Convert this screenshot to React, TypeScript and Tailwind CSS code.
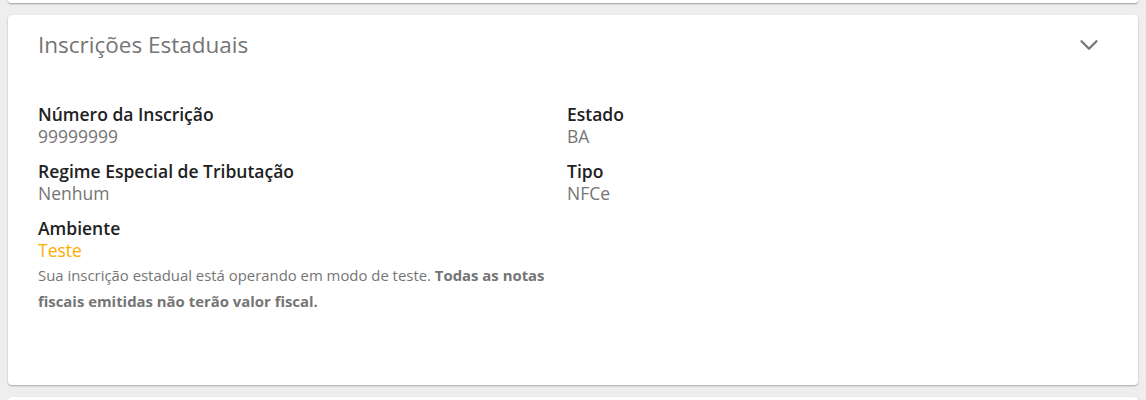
import { ChevronDown } from 'lucide-react'

const font = { fontFamily: '"Open Sans", "Liberation Sans", sans-serif' }

function Field({ label, value }: { label: string; value: string }) {
  return (
    <div className="mb-[13px]">
      <div className="text-[17.5px] leading-[22px] font-semibold text-[#212121]">{label}</div>
      <div className="text-[17.5px] leading-[22px] text-[#757575]">{value}</div>
    </div>
  )
}

export default function App() {
  return (
    <div className="min-h-[400px] bg-[#eeeeee]" style={font}>
      <div className="mx-2 h-[3px] rounded-b-sm bg-white shadow-[0_1px_2px_rgba(0,0,0,0.35)]" />
      <section className="mx-2 mt-3 h-[370px] rounded-sm bg-white shadow-[0_1px_2px_rgba(0,0,0,0.3)] px-[30px] pt-[15px]">
        <div className="flex items-center justify-between">
          <h2 className="text-[22.5px] leading-[30px] font-normal text-[#757575]">Inscrições Estaduais</h2>
          <ChevronDown className="mr-[4px] h-[30px] w-[30px] text-[#757575]" strokeWidth={1.8} />
        </div>
        <div className="mt-[43px] grid grid-cols-[529px_1fr]">
          <div className="pr-[10px]">
            <Field label="Número da Inscrição" value="99999999" />
            <Field label="Regime Especial de Tributação" value="Nenhum" />
            <div className="text-[17.5px] leading-[22px] font-semibold text-[#212121]">Ambiente</div>
            <div className="text-[17.5px] leading-[22px] text-[#ffab00]">Teste</div>
            <p className="mt-[1px] text-[14.9px] leading-[26px] text-[#757575]">
              Sua inscrição estadual está operando em modo de teste.{' '}
              <strong className="font-bold">Todas as notas fiscais emitidas não terão valor fiscal.</strong>
            </p>
          </div>
          <div>
            <Field label="Estado" value="BA" />
            <Field label="Tipo" value="NFCe" />
          </div>
        </div>
      </section>
      <div className="mx-2 mt-3 h-[10px] rounded-t-sm bg-white shadow-[0_1px_2px_rgba(0,0,0,0.3)]" />
    </div>
  )
}
